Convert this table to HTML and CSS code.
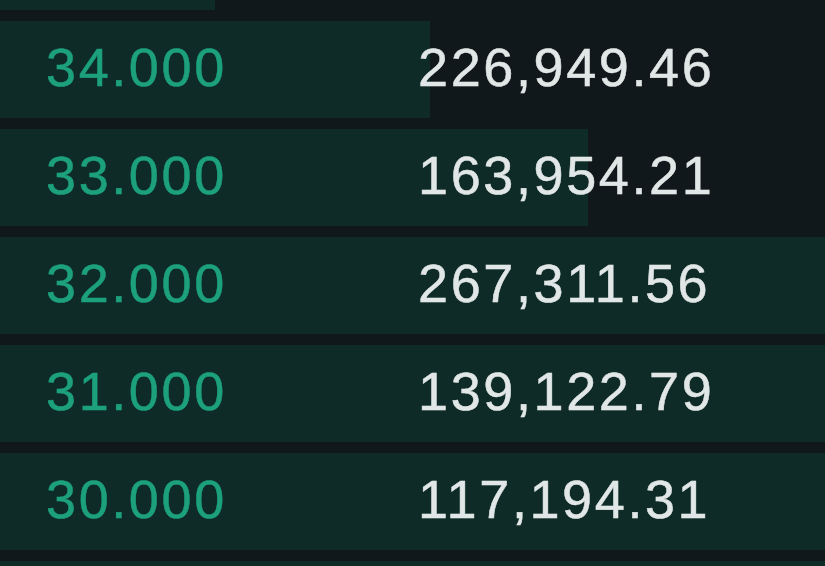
FILE: index.html
```html
<!DOCTYPE html>
<html lang="en">
<head>
    <meta charset="UTF-8">
    <title>Order Book</title>
    <link rel="stylesheet" href="styles.css">
</head>
<body>
    <div class="book">
        <div class="row" style="--depth: 26.1%"></div>
        <div class="row" style="--depth: 52.1%">
            <span class="price">34.000</span>
            <span class="amount">226,949.46</span>
        </div>
        <div class="row" style="--depth: 71.3%">
            <span class="price">33.000</span>
            <span class="amount">163,954.21</span>
        </div>
        <div class="row" style="--depth: 100%">
            <span class="price">32.000</span>
            <span class="amount">267,311.56</span>
        </div>
        <div class="row" style="--depth: 100%">
            <span class="price">31.000</span>
            <span class="amount">139,122.79</span>
        </div>
        <div class="row" style="--depth: 100%">
            <span class="price">30.000</span>
            <span class="amount">117,194.31</span>
        </div>
        <div class="row" style="--depth: 100%"></div>
    </div>
</body>
</html>
```

FILE: styles.css
```css
body {
    margin: 0;
    background-color: #11181b;
    font-family: "Liberation Sans", Arial, sans-serif;
    overflow: hidden;
}
.book {
    display: flex;
    flex-direction: column;
    gap: 11px;
    margin-top: -87px;
}
.row {
    display: grid;
    grid-template-columns: 372px 1fr;
    align-items: center;
    box-sizing: border-box;
    height: 97px;
    padding-left: 46px;
    padding-bottom: 6px;
    font-size: 54px;
    letter-spacing: 2.6px;
    -webkit-text-stroke: 0.5px;
    background: linear-gradient(to right, #0e2b27 var(--depth), transparent var(--depth));
}
.price {
    color: #1ca17c;
}
.amount {
    color: #e1e7e6;
}
```
